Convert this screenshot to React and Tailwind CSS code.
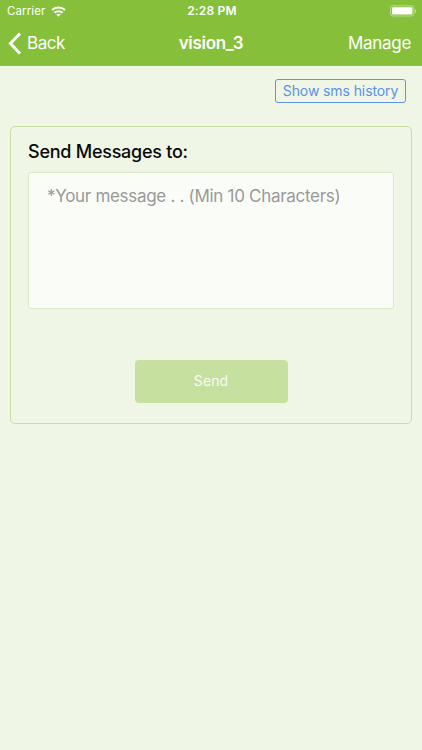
import React from "react";

function StatusBar() {
  return (
    <div className="grid h-[22px] grid-cols-3 items-center text-[12px] leading-[22px]">
      <div className="flex items-center pl-[7px]">
        <span className="w-[44px] whitespace-nowrap text-[11.5px] tracking-[0.1px]">Carrier</span>
        <svg className="block h-[11px] w-[15px]" viewBox="0 0 15 11" fill="none" stroke="white" strokeWidth="2">
          <path d="M1 4.1C4.7.6 10.3.6 14 4.1" />
          <path d="M3.4 6.8c2.3-2.1 5.9-2.1 8.2 0" />
          <path d="M7.5 10.7 5.3 8.5c1.2-1.1 3.2-1.1 4.4 0z" fill="white" stroke="none" />
        </svg>
      </div>
      <span className="pl-[2px] text-center font-semibold tracking-[0.2px]">2:28 PM</span>
      <svg className="mr-[5px] block h-[12px] w-[27px] justify-self-end" viewBox="0 0 27 12">
        <rect x="0.5" y="0.8" width="23.4" height="10.2" rx="2.6" fill="none" stroke="white" strokeOpacity="0.45" />
        <rect x="2" y="2.2" width="20.4" height="7.4" rx="1.3" fill="white" />
        <path d="M25 4v4c1.7-.7 1.7-3.3 0-4z" fill="white" fillOpacity="0.5" />
      </svg>
    </div>
  );
}

function NavBar() {
  return (
    <div className="grid h-[43px] grid-cols-3 items-center text-[17px]">
      <button className="flex items-center pl-[8px]">
        <svg className="mr-[6px] block h-[23px] w-[13px]" viewBox="0 0 13 23" fill="none" stroke="white" strokeWidth="3">
          <path d="M12 1.5 2.4 11.5 12 21.5" />
        </svg>
        <span className="tracking-[-0.45px]">Back</span>
      </button>
      <h1 className="text-center font-semibold tracking-[-0.3px]">vision_3</h1>
      <button className="justify-self-end pr-[11px] tracking-[-0.3px]">Manage</button>
    </div>
  );
}

export default function App() {
  return (
    <div className="flex h-[750px] w-[422px] flex-col overflow-hidden bg-[#eff6e6] font-['Inter',sans-serif]">
      <header className="h-[66px] shrink-0 border-b border-[#9bb872] bg-[#86c03a] text-white">
        <StatusBar />
        <NavBar />
      </header>
      <div className="flex justify-end pr-[16px] pt-[13px]">
        <button className="h-[24px] w-[131px] whitespace-nowrap rounded-[3px] border border-[#5d95e8] text-[14px] leading-[22px] tracking-[-0.1px] text-[#5b91e6]">
          Show sms history
        </button>
      </div>
      <section className="mx-[10px] mt-[23px] flex h-[298px] flex-col rounded-[5px] border border-[#c6dfa2] px-[17px] pt-[13px]">
        <h2 className="text-[18px] font-medium leading-[24px] tracking-[-0.25px] text-[#0a0a0a]">Send Messages to:</h2>
        <textarea
          className="mt-[8px] block h-[137px] w-[366px] shrink-0 resize-none rounded-[3px] border border-[#d9e9c4] bg-[#fafdf7] px-[18px] pt-[11px] text-[17px] leading-[24px] tracking-[-0.3px] outline-none placeholder:text-[#999999]"
          placeholder="*Your message . . (Min 10 Characters)"
        />
        <button className="mt-[51px] h-[43px] w-[153px] shrink-0 self-center rounded-[4px] bg-[#c6e0a0] pb-[2px] text-[14px] tracking-[0.1px] text-[#f8fcf2]">
          Send
        </button>
      </section>
    </div>
  );
}
